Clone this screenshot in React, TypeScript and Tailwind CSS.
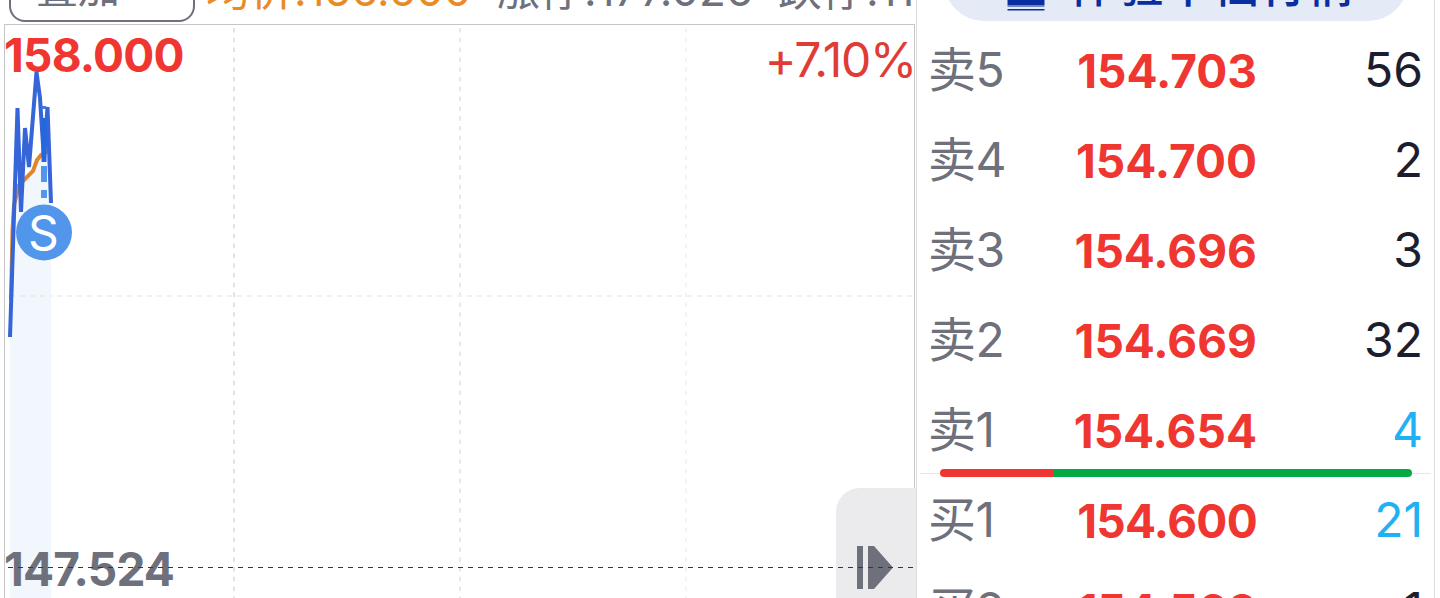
import React from "react";

type Row = { label: string; price: string; qty: string; hot?: boolean; tight?: boolean };

const asks: Row[] = [
  { label: "卖5", price: "154.703", qty: "56" },
  { label: "卖4", price: "154.700", qty: "2" },
  { label: "卖3", price: "154.696", qty: "3" },
  { label: "卖2", price: "154.669", qty: "32" },
  { label: "卖1", price: "154.654", qty: "4", hot: true },
];

const bids: Row[] = [
  { label: "买1", price: "154.600", qty: "21", hot: true, tight: true },
  { label: "买2", price: "154.560", qty: "1", tight: true },
];

function QuoteRow({ label, price, qty, hot, tight }: Row) {
  return (
    <div className="flex h-[90px] shrink-0 items-center pl-[11px] pr-[11px] text-[48px] leading-[60px]">
      <span className="w-[101px] shrink-0 tracking-[-0.5px] text-[#6e707c]">{label}</span>
      <span className={`w-[228px] shrink-0 pt-[2px] text-right text-[46px] font-bold text-[#f03630] ${tight ? "tracking-[-0.7px]" : ""}`}>{price}</span>
      <span className={hot ? "grow text-right text-[#1fb1f3]" : "grow text-right text-[#1c1e30]"}>{qty}</span>
    </div>
  );
}

function Chart() {
  return (
    <svg className="block" width="909" height="573" viewBox="5 25 909 573" fill="none">
      <path d="M234 28V598" stroke="#e2e2e4" strokeWidth="2" strokeDasharray="4.5 5.3" />
      <path d="M460 28V598" stroke="#e8e8ea" strokeWidth="2" strokeDasharray="4.5 5.3" />
      <path d="M686 28V598" stroke="#f3f3f4" strokeWidth="2" strokeDasharray="4.5 5.3" />
      <path d="M7 296H914" stroke="#f0f0f1" strokeWidth="2" strokeDasharray="5 5" />
      <path d="M10 337L14 210L18 180L26 178L34 170L40 155L51 150V598H10Z" fill="#f1f7fc" />
      <path d="M10 296H51" stroke="#e7ecf1" strokeWidth="2" strokeDasharray="5 5" />
      <path d="M11 300L12.500 230L14 205L19 185L26 178L33 171L37 160L41 155L50 150" stroke="#e2852a" strokeWidth="4" />
      <path d="M10 337L17.500 108L21 212L25 128L29 167L36.500 72L40 98L44 160L47.500 107L51 203" stroke="#3565d8" strokeWidth="4" strokeLinejoin="bevel" />
      <path d="M41.500 107.500H46" stroke="#3b7be6" strokeWidth="3" />
      <path d="M44 118V162" stroke="#2468e0" strokeWidth="5" />
      <path d="M44 166V182M44 190V198" stroke="#5295ea" strokeWidth="6" />
      <circle cx="44" cy="232.500" r="28" fill="#5296ec" />
    </svg>
  );
}

export default function App() {
  return (
    <div className="flex h-[598px] w-[1440px] overflow-hidden bg-white font-['Inter','Noto_Sans_CJK_SC',sans-serif]">
      <section className="flex w-[917px] shrink-0 flex-col border-r border-[#dcdcde]">
        <div className="flex h-[24px] shrink-0 items-end overflow-hidden whitespace-nowrap pl-[9px] text-[44px] leading-[60px] [font-feature-settings:'calt'_0]">
          <div className="mb-[2px] flex h-[66px] w-[186px] shrink-0 items-center rounded-[16px] border-2 border-[#6e707c] pb-[2px] pl-[25px] text-[42px] text-[#6e707c]">叠加</div>
          <span className="mb-[4px] ml-[11px] w-[290px] shrink-0 text-[#e98a25]">均价:156.600</span>
          <span className="mb-[4px] w-[282px] shrink-0 text-[#6e707c]">涨停:177.026</span>
          <span className="mb-[4px] shrink-0 text-[#6e707c]">跌停:118.018</span>
        </div>
        <div className="relative ml-[4px] h-[574px] w-[911px] shrink-0 border border-b-0 border-[#c6c6c8]">
          <div className="absolute bottom-0 right-[-2px] h-[110px] w-[80px] rounded-tl-[24px] bg-[#ebebed]" />
          <div className="absolute inset-0"><Chart /></div>
          <span className="absolute left-[-1px] top-0 text-[46px] font-bold leading-[60px] tracking-[-0.8px] text-[#f03630]">158.000</span>
          <span className="absolute right-[-2px] top-[5px] text-[48px] leading-[60px] tracking-[-1.2px] text-[#e03c36]">+7.10%</span>
          <span className="absolute left-[-1px] top-[514px] text-[46px] font-bold leading-[60px] tracking-[-0.8px] text-[#6e707c]">147.524</span>
          <span className="absolute left-[23px] top-[178px] text-[48px] leading-[60px] text-white">S</span>
          <svg className="absolute inset-0" width="909" height="573" viewBox="5 25 909 573">
            <path d="M857 546h6v43h-6zM868 546h6L893 567.500L874 589h-6z" fill="#6e707c" />
            <path d="M8 567.500H914" stroke="#35363e" strokeWidth="1.200" strokeDasharray="5 5" />
          </svg>
        </div>
      </section>
      <section className="flex w-[518px] shrink-0 flex-col border-r border-[#dcdcde]">
        <div className="flex h-[25px] shrink-0 items-end justify-center pb-[4px]">
          <div className="flex h-[80px] w-[464px] shrink-0 items-center rounded-full bg-[#e4eaf6] pl-[62px] pt-[7px] text-[47px] font-medium leading-[60px] tracking-[0.6px] text-[#0a2ea0]">
            <svg className="mr-[24px] shrink-0" width="40" height="52" viewBox="0 0 40 52">
              <path d="M1.500 0h37v46h-37z" fill="#0a2ea0" />
              <path d="M1.500 46h37v2h-37z" fill="#6f86c6" />
              <path d="M1.500 50h37v1.500h-37z" fill="#0a2ea0" />
            </svg>
            体验千档行情
          </div>
        </div>
        {asks.map((r) => <QuoteRow key={r.label} {...r} />)}
        <div className="relative z-10 mx-[3px] -mt-[6px] -mb-[2px] flex h-[8px] shrink-0 items-center">
          <div className="h-px w-[20px] bg-[#e8e8ea]" />
          <div className="h-[8px] w-[114px] rounded-l-full bg-[#f03630]" />
          <div className="h-[8px] w-[358px] rounded-r-full bg-[#05aa46]" />
          <div className="h-px grow bg-[#e8e8ea]" />
        </div>
        {bids.map((r) => <QuoteRow key={r.label} {...r} />)}
      </section>
    </div>
  );
}
